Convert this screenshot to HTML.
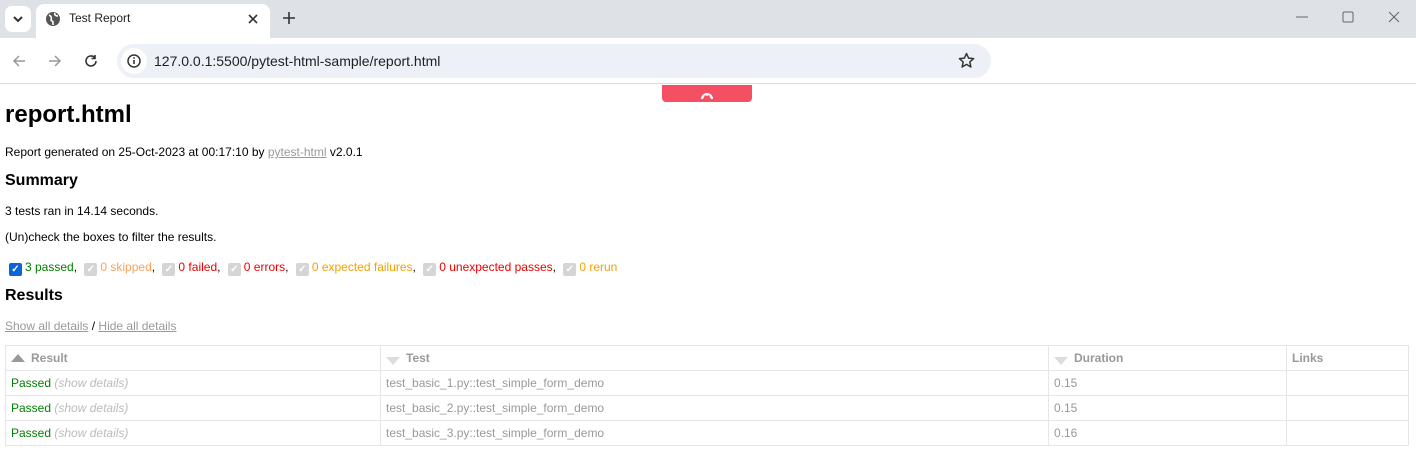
<!DOCTYPE html>
<html><head><style>
*{margin:0;padding:0;box-sizing:border-box}
body{width:1416px;height:460px;overflow:hidden;background:#fff;font-family:"Liberation Sans",Arial,sans-serif;position:relative}
.abs{position:absolute}
.tabs{left:0;top:0;width:1416px;height:38px;background:#dee1e6}
.tab{left:36px;top:4px;width:234px;height:34px;background:#fff;border-radius:8px 8px 0 0}
.tb{left:0;top:38px;width:1416px;height:46px;background:#fff;border-bottom:1px solid #dadce0}
.addr{left:117px;top:44px;width:874px;height:34px;background:#edf0f7;border-radius:17px}
.c{font-size:12px;color:#000}
table{position:absolute;left:5px;top:345px;width:1404px;border-collapse:collapse;font-size:12px}
td,th{border:1px solid #e6e6e6;height:25px;padding:0 5px;text-align:left;color:#999;font-weight:normal}
th{font-weight:bold;color:#999}
.p{color:#008000}.sd{color:#bbb;font-style:italic}
.cb{display:inline-block;width:13px;height:13px;background:#d5d5d5;border-radius:2px;vertical-align:-1px;margin:0 3px 0 4px;color:#fff;font-size:10px;line-height:13px;text-align:center;font-weight:bold}
a{color:#999}
</style></head><body>
<div class="abs tabs"></div>
<div class="abs" style="left:5px;top:6px;width:26px;height:26px;background:#fff;border-radius:7px"></div>
<svg class="abs" style="left:11px;top:12px" width="14" height="14"><path d="M3 5l4 4 4-4" stroke="#333" stroke-width="2" fill="none"/></svg>
<div class="abs tab"></div>
<svg class="abs" style="left:45px;top:11px" width="16" height="16"><circle cx="8" cy="8" r="7" fill="#555"/><path d="M4 4c2 1 3 3 2 5l2 2v3M10 2c-1 2 1 3 3 3" stroke="#fff" stroke-width="1.6" fill="none"/></svg>
<div class="abs" style="left:69px;top:11px;font-size:12px;color:#202124">Test Report</div>
<svg class="abs" style="left:247px;top:13px" width="12" height="12"><path d="M2 2l8 8M10 2l-8 8" stroke="#333" stroke-width="1.6"/></svg>
<svg class="abs" style="left:282px;top:11px" width="14" height="14"><path d="M7 1v12M1 7h12" stroke="#333" stroke-width="1.6"/></svg>
<svg class="abs" style="left:1296px;top:16px" width="12" height="2"><path d="M0 1h12" stroke="#666"/></svg>
<svg class="abs" style="left:1342px;top:11px" width="12" height="12"><rect x="1" y="1" width="10" height="10" rx="1.5" stroke="#666" fill="none"/></svg>
<svg class="abs" style="left:1388px;top:11px" width="12" height="12"><path d="M1 1l10 10M11 1l-10 10" stroke="#666"/></svg>
<div class="abs tb"></div>
<svg class="abs" style="left:12px;top:54px" width="14" height="14"><path d="M13 7H2M7 2L2 7l5 5" stroke="#999" stroke-width="1.5" fill="none"/></svg>
<svg class="abs" style="left:48px;top:54px" width="14" height="14"><path d="M1 7h11M7 2l5 5-5 5" stroke="#999" stroke-width="1.5" fill="none"/></svg>
<svg class="abs" style="left:84px;top:54px" width="14" height="14"><path d="M12 7a5 5 0 1 1-1.5-3.6M11 1v3.5H7.5" stroke="#333" stroke-width="1.6" fill="none"/></svg>
<div class="abs addr"></div>
<div class="abs" style="left:121px;top:48px;width:26px;height:26px;background:#fff;border-radius:13px"></div>
<svg class="abs" style="left:127px;top:54px" width="14" height="14"><circle cx="7" cy="7" r="6" stroke="#333" stroke-width="1.5" fill="none"/><path d="M7 6v4" stroke="#333" stroke-width="1.6"/><circle cx="7" cy="4" r="0.9" fill="#333"/></svg>
<div class="abs" style="left:154px;top:53px;font-size:14px;color:#202124">127.0.0.1:5500/pytest-html-sample/report.html</div>
<svg class="abs" style="left:958px;top:52px" width="17" height="17"><path d="M8.5 1.5l2.1 4.6 5 .5-3.8 3.4 1.1 5L8.5 12.4 4.1 15l1.1-5L1.4 6.6l5-.5z" stroke="#333" stroke-width="1.5" fill="none" stroke-linejoin="round"/></svg>
<div class="abs" style="left:662px;top:85px;width:90px;height:17px;background:#f44f63;border-radius:0 0 4px 4px"></div>
<svg class="abs" style="left:700px;top:88px" width="14" height="12"><path d="M1 11a6 6 0 0 1 12 0l-2 0-2-4-2 1-2-1-2 4z" fill="#fff"/></svg>
<div class="abs" style="left:5px;top:101px;font-size:24px;font-weight:bold">report.html</div>
<div class="abs c" style="left:5px;top:145px">Report generated on 25-Oct-2023 at 00:17:10 by <a style="text-decoration:underline">pytest-html</a> v2.0.1</div>
<div class="abs" style="left:5px;top:172px;font-size:16px;font-weight:bold">Summary</div>
<div class="abs c" style="left:5px;top:204px">3 tests ran in 14.14 seconds.</div>
<div class="abs c" style="left:5px;top:230px">(Un)check the boxes to filter the results.</div>
<div class="abs c" style="left:5px;top:260px"><span class="cb" style="background:#0b64d8">✓</span><span class="p">3 passed</span>, <span class="cb">✓</span><span style="color:#faa05a">0 skipped</span>, <span class="cb">✓</span><span style="color:#e00">0 failed</span>, <span class="cb">✓</span><span style="color:#e00">0 errors</span>, <span class="cb">✓</span><span style="color:#f5a000">0 expected failures</span>, <span class="cb">✓</span><span style="color:#e00">0 unexpected passes</span>, <span class="cb">✓</span><span style="color:#f5a000">0 rerun</span></div>
<div class="abs" style="left:5px;top:287px;font-size:16px;font-weight:bold">Results</div>
<div class="abs c" style="left:5px;top:319px"><a style="text-decoration:underline">Show all details</a> / <a style="text-decoration:underline">Hide all details</a></div>
<table>
<tr><th style="width:375px"><span style="display:inline-block;width:0;height:0;border:7px solid transparent;border-bottom:8px solid #999;border-top:0;margin-right:6px"></span>Result</th><th style="width:668px"><span style="display:inline-block;width:0;height:0;border:7px solid transparent;border-top:8px solid #ddd;border-bottom:0;margin-right:6px;vertical-align:-3px"></span>Test</th><th style="width:238px"><span style="display:inline-block;width:0;height:0;border:7px solid transparent;border-top:8px solid #ddd;border-bottom:0;margin-right:6px;vertical-align:-3px"></span>Duration</th><th>Links</th></tr>
<tr><td><span class="p">Passed</span> <span class="sd">(show details)</span></td><td>test_basic_1.py::test_simple_form_demo</td><td>0.15</td><td></td></tr>
<tr><td><span class="p">Passed</span> <span class="sd">(show details)</span></td><td>test_basic_2.py::test_simple_form_demo</td><td>0.15</td><td></td></tr>
<tr><td><span class="p">Passed</span> <span class="sd">(show details)</span></td><td>test_basic_3.py::test_simple_form_demo</td><td>0.16</td><td></td></tr>
</table>
</body></html>
